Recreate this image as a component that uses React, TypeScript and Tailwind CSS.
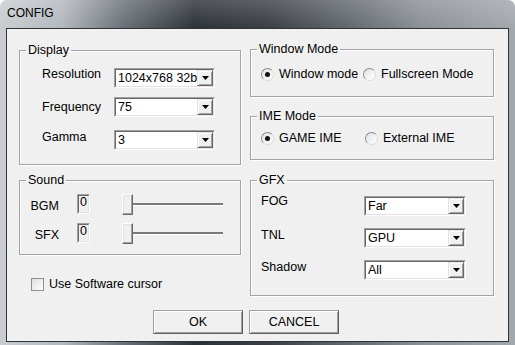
import React from "react";

const sunkenOuter =
  "border border-t-[#a0a0a0] border-l-[#a0a0a0] border-r-white border-b-white";
const sunkenInner =
  "border border-t-[#696969] border-l-[#696969] border-r-[#e3e3e3] border-b-[#e3e3e3]";

function Dropdown({ value, className = "" }: { value: string; className?: string }) {
  return (
    <div className={`h-[20px] ${sunkenOuter} ${className}`}>
      <div className={`flex h-full bg-white ${sunkenInner}`}>
        <span className="flex-1 overflow-hidden whitespace-nowrap pl-[2px] leading-[16px]">
          {value}
        </span>
        <div className="flex w-[16px] items-center justify-center border border-t-[#e3e3e3] border-l-[#e3e3e3] border-r-[#696969] border-b-[#696969] bg-[#f0f0f0] shadow-[inset_1px_1px_0_#fff,inset_-1px_-1px_0_#a0a0a0]">
          <svg width="7" height="4" viewBox="0 0 7 4">
            <path d="M0 0h7L3.5 4z" fill="#000" />
          </svg>
        </div>
      </div>
    </div>
  );
}

function Radio({ checked }: { checked?: boolean }) {
  return (
    <span className="flex size-[13px] shrink-0 items-center justify-center rounded-full border border-t-[#8a8a8a] border-l-[#8a8a8a] border-r-[#dcdcdc] border-b-[#dcdcdc] bg-gradient-to-br from-[#e4e4e4] to-white">
      {checked && <span className="size-[5px] rounded-full bg-[#111]" />}
    </span>
  );
}

function Group({
  title,
  className = "",
  inner = "",
  children,
}: {
  title: string;
  className?: string;
  inner?: string;
  children: React.ReactNode;
}) {
  return (
    <fieldset
      className={`border border-[#a3a3a3] shadow-[inset_1px_1px_0_#fff,1px_1px_0_#fff] ${className}`}
    >
      <legend className="ml-[6px] px-[2px] leading-[14px]">{title}</legend>
      <div className={inner}>{children}</div>
    </fieldset>
  );
}

function Slider() {
  return (
    <div className="flex w-[101px] items-center">
      <div className="h-[21px] w-[11px] border border-t-white border-l-white border-r-[#696969] border-b-[#696969] bg-[#f0f0f0] shadow-[inset_-1px_-1px_0_#a0a0a0,inset_1px_1px_0_#e3e3e3]" />
      <div className="h-[3px] flex-1 border-t-2 border-[#7a7a7a] bg-white" />
    </div>
  );
}

function ValueBox() {
  return (
    <div className={`h-[20px] w-[13px] ${sunkenOuter}`}>
      <div className={`h-full bg-[#f0f0f0] pl-[1px] leading-[13px] ${sunkenInner}`}>0</div>
    </div>
  );
}

function Button({ label }: { label: string }) {
  return (
    <div className="flex h-[24px] w-[90px] items-center justify-center border border-[#a0a0a0] border-r-[#5f5f5f] border-b-[#5f5f5f] bg-[#f0f0f0] shadow-[inset_1px_1px_0_#fff,inset_-1px_-1px_0_#a0a0a0]">
      {label}
    </div>
  );
}

export default function App() {
  return (
    <div className="h-[345px] w-[515px] overflow-hidden rounded-t-[7px] bg-[linear-gradient(90deg,#c9cdd1_0%,#b3b8bd_12%,#6a7077_24%,#2d3239_38%,#3b3f44_52%,#5e646a_66%,#8c9196_82%,#a3a8ad_100%)] font-['Liberation_Sans',Arial,sans-serif] text-[12.5px] text-black">
      <div className="flex h-[28px] items-center bg-[linear-gradient(180deg,rgba(255,255,255,0.18),rgba(255,255,255,0))] pb-[2px] pl-[7px] text-[12px]">
        CONFIG
      </div>
      <div className="ml-[6px] h-[314px] w-[503px] border border-[#30353b] bg-[#f0f0f0]">
        <div className="flex gap-[9px] pl-[12px]">
          {/* left column */}
          <div className="flex w-[222px] flex-col pt-[14px]">
            <Group title="Display" className="h-[122px]" inner="pl-[22px] pt-[11px]">
              {[
                { label: "Resolution", value: "1024x768 32b", off: "mt-[-1px]", gap: "" },
                { label: "Frequency", value: "75", off: "mt-[3px]", gap: "mt-[9px]" },
                { label: "Gamma", value: "3", off: "mt-[0px]", gap: "mt-[13px]" },
              ].map((r) => (
                <div key={r.label} className={`flex items-start ${r.gap}`}>
                  <span className={`w-[72px] leading-[14px] ${r.off}`}>{r.label}</span>
                  <Dropdown value={r.value} className="w-[101px]" />
                </div>
              ))}
            </Group>
            <Group title="Sound" className="mt-[8px] h-[82px]" inner="pl-[10px] pt-[7px]">
              {["BGM", "SFX"].map((s, i) => (
                <div key={s} className={`flex items-start ${i ? "mt-[8px]" : ""}`}>
                  <span className="mt-[5px] w-[29px] text-right leading-[14px]">{s}</span>
                  <div className="ml-[18px]">
                    <ValueBox />
                  </div>
                  <div className="ml-[32px] flex h-[21px] items-center">
                    <Slider />
                  </div>
                </div>
              ))}
            </Group>
            <div className="mt-[22px] flex items-center pl-[12px]">
              <span className="size-[13px] border border-[#8e8f8f] bg-gradient-to-br from-[#dedede] to-white" />
              <span className="ml-[5px] leading-[14px]">Use Software cursor</span>
            </div>
          </div>

          {/* right column */}
          <div className="flex w-[244px] flex-col pt-[13px]">
            <Group title="Window Mode" className="h-[55px]" inner="pl-[10px] pt-[11px]">
              <div className="flex h-[14px] items-center">
                <div className="flex w-[102px] items-center gap-[5px]">
                  <Radio checked />
                  <span>Window mode</span>
                </div>
                <div className="flex items-center gap-[5px]">
                  <Radio />
                  <span>Fullscreen Mode</span>
                </div>
              </div>
            </Group>
            <Group title="IME Mode" className="mt-[12px] h-[51px]" inner="pl-[10px] pt-[8px]">
              <div className="flex h-[14px] items-center">
                <div className="flex w-[104px] items-center gap-[5px]">
                  <Radio checked />
                  <span>GAME IME</span>
                </div>
                <div className="flex items-center gap-[5px]">
                  <Radio />
                  <span>External IME</span>
                </div>
              </div>
            </Group>
            <Group title="GFX" className="mt-[13px] h-[123px]" inner="pl-[10px] pt-[9px]">
              {[
                { label: "FOG", value: "Far", off: "mt-[-2px]", gap: "" },
                { label: "TNL", value: "GPU", off: "mt-[0px]", gap: "mt-[12px]" },
                { label: "Shadow", value: "All", off: "mt-[0px]", gap: "mt-[12px]" },
              ].map((r) => (
                <div key={r.label} className={`flex items-start ${r.gap}`}>
                  <span className={`w-[103px] leading-[14px] ${r.off}`}>{r.label}</span>
                  <Dropdown value={r.value} className="w-[102px]" />
                </div>
              ))}
            </Group>
          </div>
        </div>
        <div className="mt-[14px] flex gap-[6px] pl-[146px]">
          <Button label="OK" />
          <Button label="CANCEL" />
        </div>
      </div>
    </div>
  );
}
